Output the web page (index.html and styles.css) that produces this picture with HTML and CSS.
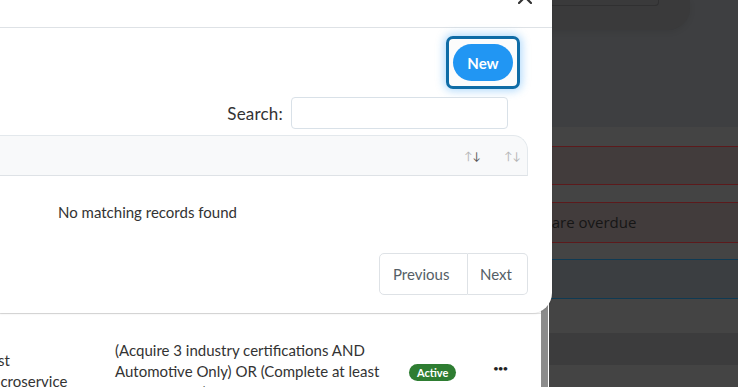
FILE: index.html
```html
<!DOCTYPE html>
<html lang="en">
<head>
    <meta charset="UTF-8">
    <title>Goals</title>
    <link rel="stylesheet" href="styles.css">
</head>
<body>

    <div class="layout">
        <aside class="sheet">
            <div class="sheet-content">
                <div class="sheet-spacer"></div>
                <div class="goal-row">
                    <div class="goal-name">Test Microservice</div>
                    <div class="goal-criteria">(Acquire 3 industry certifications AND Automotive Only) OR (Complete at least 2 hours a day)</div>
                    <div class="goal-status"><span class="badge">Active</span></div>
                    <div class="goal-actions">&bull;&bull;&bull;</div>
                </div>
            </div>
            <div class="scrollbar"></div>
        </aside>

        <main class="app">
            <div class="app-top">
                <div class="filter-card">
                    <div class="filter-input"></div>
                </div>
            </div>
            <div class="app-body">
                <div class="alert alert-red"></div>
                <div class="alert alert-red">You have tasks that are overdue</div>
                <div class="alert alert-blue"></div>
                <div class="band"></div>
            </div>
        </main>
    </div>

    <section class="modal">
        <header class="modal-header">
            <button class="close" aria-label="Close">
                <svg width="14" height="14" viewBox="0 0 14 14"><path d="M1 1 L13 13 M13 1 L1 13" stroke="#333" stroke-width="2.2" stroke-linecap="round"/></svg>
            </button>
        </header>
        <div class="modal-body">
            <div class="toolbar">
                <div class="focus-ring"><button class="btn-new">New</button></div>
            </div>
            <div class="filter">
                <label>Search:</label>
                <input type="search">
            </div>
            <table class="grid">
                <thead>
                    <tr>
                        <th></th>
                        <th class="sort"><span class="up">&uarr;</span><span class="down on">&darr;</span></th>
                        <th class="sort last"><span class="up">&uarr;</span><span class="down">&darr;</span></th>
                    </tr>
                </thead>
                <tbody>
                    <tr>
                        <td colspan="3" class="empty">No matching records found</td>
                    </tr>
                </tbody>
            </table>
            <div class="pager">
                <a class="page">Previous</a>
                <a class="page">Next</a>
            </div>
        </div>
    </section>

</body>
</html>
```

FILE: styles.css
```css
html,body {
	margin:0;
	padding:0;
	height:100%;
	overflow:hidden;
}
body {
	font-family:"Lato","Noto Sans",sans-serif;
	color:#212529;
	position:relative;
	background:#444;
}
.layout {
	display:grid;
	grid-template-columns:549px 1fr;
	height:387px;
}

/* left sheet under the modal */
.sheet {
	display:grid;
	grid-template-columns:541px 7px;
	background:#fff;
	border-right:1px solid #fff;
	overflow:hidden;
}
.sheet-spacer {
	height:313px;
}
.scrollbar {
	background:#8b8b8b;
}
.goal-row {
	display:flex;
	align-items:center;
	border-top:1px solid #e6e6e6;
	height:114px;
	margin-left:-17px;
	font-size:15px;
	line-height:21px;
	color:#333;
}
.goal-name {
	width:100px;
	margin-right:32px;
}
.goal-criteria {
	width:270px;
	margin-right:24px;
}
.goal-status {
	width:84px;
}
.badge {
	display:inline-block;
	background:#2e7d32;
	color:#fff;
	font-size:11px;
	font-weight:bold;
	line-height:17px;
	padding:0 8px;
	border-radius:9px;
	margin-top:1px;
}
.goal-actions {
	font-size:10px;
	letter-spacing:-1px;
	color:#222;
	margin-top:-5px;
}

/* dimmed app on the right */
.app {
	background:#444;
	font-family:"Open Sans",sans-serif;
}
.app-top {
	height:127px;
	background:#3e3f41;
}
.filter-card {
	height:30px;
	margin-right:48px;
	background:#3a3a3b;
	border-radius:0 0 22px 0;
	box-shadow:0 2px 6px rgba(0,0,0,.08);
}
.filter-input {
	height:5px;
	margin-right:31px;
	border:1px solid #303031;
	border-top:none;
	border-radius:0 0 4px 4px;
}
.app-body {
	padding-top:19px;
}
.alert {
	height:37px;
	background:#423c3c;
	border-top:1px solid #5c1a1c;
	border-bottom:1px solid #5c1a1c;
	margin-bottom:17px;
	font-size:15px;
	line-height:39px;
	color:#161616;
	white-space:nowrap;
	text-indent:-137px;
}
.alert-red + .alert-red {
	height:39px;
	margin-bottom:16px;
}
.alert-blue {
	height:38px;
	background:#3b3e41;
	border-color:#0f3a53;
	margin-bottom:34px;
}
.band {
	height:32px;
	background:#3c3c3d;
}

/* modal */
.modal {
	position:absolute;
	left:0;
	top:0;
	width:552px;
	height:313px;
	background:#fff;
	border-radius:0 0 20px 0;
	box-shadow:0 1px 2px rgba(0,0,0,.1);
}
.modal-header {
	height:27px;
	border-bottom:1px solid #dee2e6;
	display:flex;
	justify-content:flex-end;
	padding-right:20px;
}
.close {
	background:none;
	border:none;
	padding:0;
	margin-top:-10px;
	height:14px;
}
.modal-body {
	padding:0 24px 0 0;
}
.toolbar {
	display:flex;
	justify-content:flex-end;
	padding:8px 8px 0 0;
}
.focus-ring {
	border:3px solid #0f6ca6;
	border-radius:7px;
	padding:5px 4px;
	background:#fcfcfc;
	box-shadow:0 0 9px 2px rgba(33,150,243,.35);
}
.btn-new {
	display:block;
	width:60px;
	height:37px;
	border:none;
	border-radius:19px;
	background:#2196f3;
	color:#fff;
	font-family:"Lato",sans-serif;
	font-size:15px;
	font-weight:bold;
	outline:none;
}
.filter {
	display:flex;
	justify-content:flex-end;
	align-items:center;
	gap:8px;
	padding:8px 20px 0 0;
	font-size:17px;
	color:#333;
}
.filter label {
	letter-spacing:.2px;
}
.filter input {
	-webkit-appearance:none;
	width:217px;
	height:32px;
	box-sizing:border-box;
	border:1px solid #d9e1e8;
	border-radius:4px;
	outline:none;
}
.grid {
	width:calc(100% + 20px);
	margin:6px 0 0 -20px;
	border-collapse:separate;
	border-spacing:0;
}
.grid th {
	height:39px;
	padding:0;
	background:#f8f9fa;
	border-top:1px solid #e3e8ec;
	border-bottom:1px solid #dee2e6;
	font-size:11px;
	font-weight:normal;
}
.grid th.sort {
	width:40px;
	text-align:left;
	color:#b5b5b5;
}
.grid th.sort span.on {
	color:#555;
}
.grid th.last {
	width:23px;
	border-top-right-radius:15px;
	border-right:1px solid #e3e8ec;
}
.grid td.empty {
	height:72px;
	padding:0 0 0 78px;
	font-size:15px;
	color:#333;
}
.pager {
	display:flex;
	justify-content:flex-end;
	margin-top:5px;
}
.page {
	display:block;
	height:40px;
	line-height:40px;
	border:1px solid #dee2e6;
	color:#555e66;
	font-size:15px;
	padding:0 12px;
	cursor:pointer;
}
.page:first-child {
	border-radius:5px 0 0 5px;
	width:62px;
	padding:0 12px 0 13px;
}
.page + .page {
	border-left:none;
	border-radius:0 5px 5px 0;
	width:35px;
}
```
